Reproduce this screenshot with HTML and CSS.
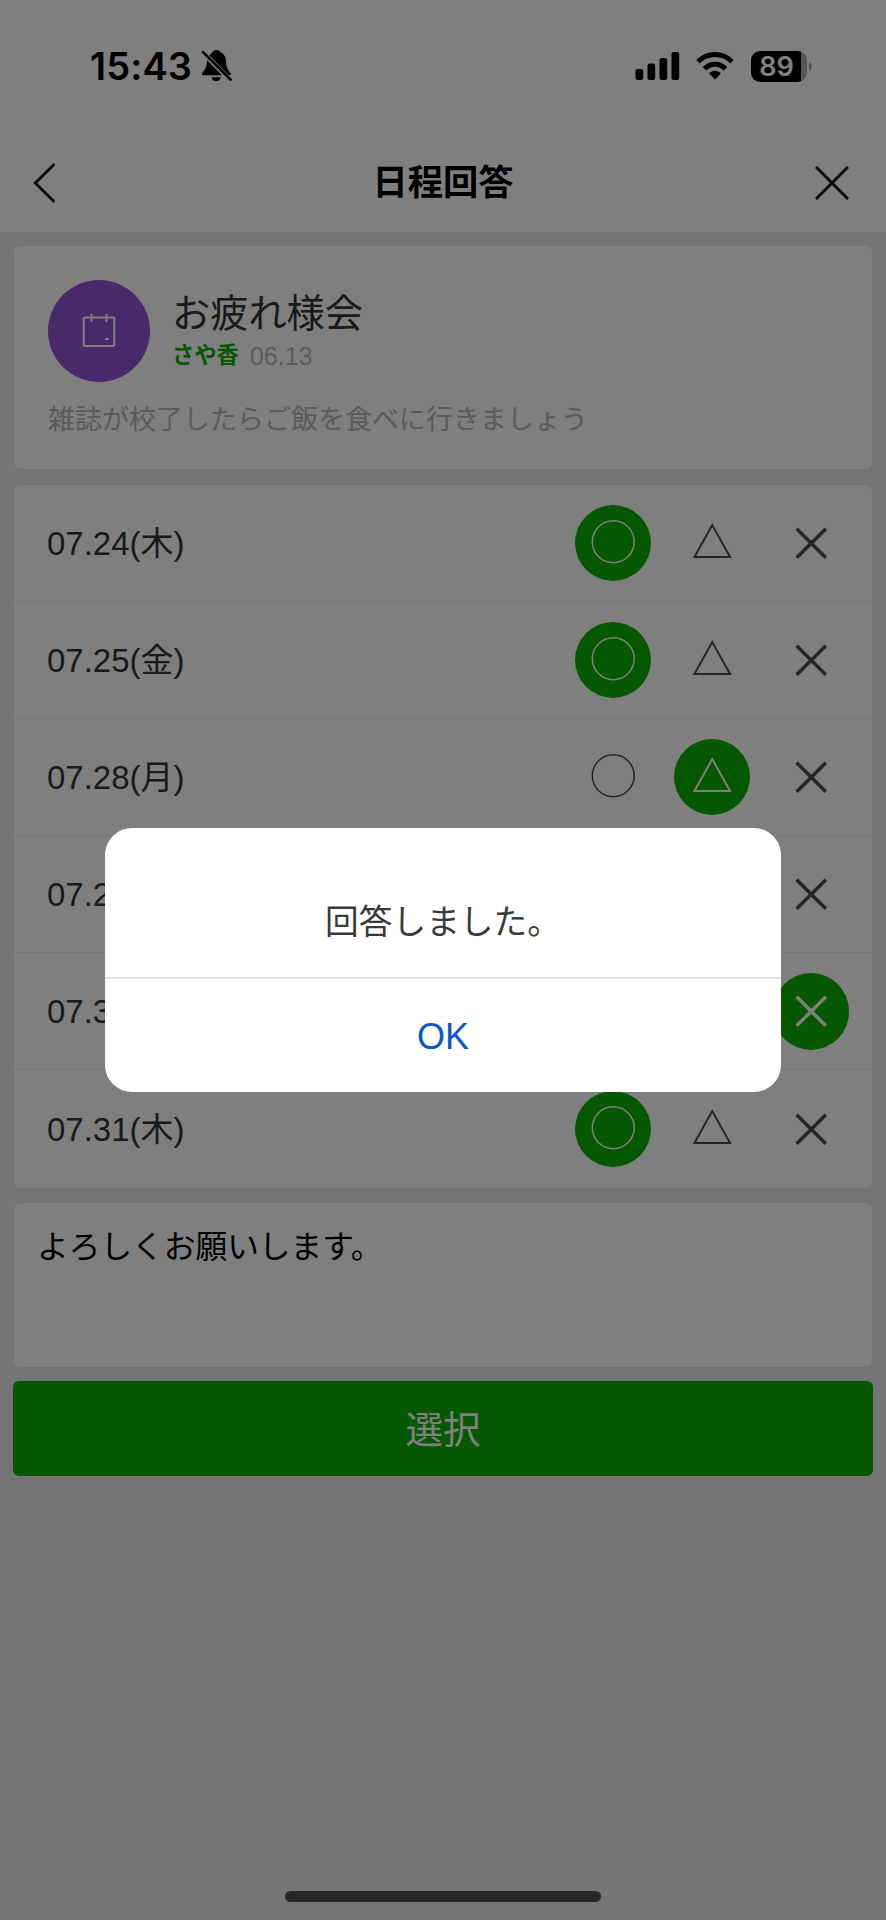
FILE: index.html
```html
<!DOCTYPE html>
<html lang="ja">
<head>
    <meta charset="UTF-8">
    <meta name="viewport" content="width=device-width, initial-scale=1.0">
    <title>日程回答</title>
    <link rel="stylesheet" href="styles.css">
</head>
<body>
<svg class="symbols">
    <symbol id="maru" viewBox="0 0 76 76">
        <circle cx="38" cy="36.5" r="20.8" stroke-width="1.5"/>
    </symbol>
    <symbol id="sankaku" viewBox="0 0 76 76">
        <path d="M38 20L55.700 51.700H20.300Z" stroke-width="2"/>
    </symbol>
    <symbol id="batsu" viewBox="0 0 76 76">
        <path d="M23.500 23.500l29 29M52.500 23.500l-29 29" stroke-width="3.500"/>
    </symbol>
</svg>

<div class="screen">
    <div class="status-bar">
        <span class="time">15:43</span>
        <svg class="bell" width="32" height="34" viewBox="0 0 32 34">
            <path d="M8.500 6.500C10 4.500 11 3.500 12 2.900C12.700 .3 18.300 .3 19.300 2.900C23.500 5 25 8.500 25 12.500C25.200 17 26 20 30 24.500V26H27.500Z"/>
            <path d="M6 11.300L21 26.300H2C.8 26.300 .6 24.600 1.500 23.500C5 19.700 5.700 17 6 11.300Z"/>
            <path d="M10.500 28.200h9.400c-1 5.300-8.400 5.300-9.400 0z"/>
            <path class="slash" d="M2 3.200L29.500 30.500"/>
        </svg>
        <div class="status-icons">
            <svg width="45" height="28" viewBox="0 0 45 28">
                <rect x="0.500" y="17" width="7.700" height="11" rx="2.200"/>
                <rect x="12.500" y="11.500" width="7.700" height="16.500" rx="2.200"/>
                <rect x="24.500" y="6" width="7.700" height="22" rx="2.200"/>
                <rect x="36.500" y="0" width="7.700" height="28" rx="2.200"/>
            </svg>
            <svg class="wifi" width="38" height="28" viewBox="0 0 38 28">
                <path class="arc" d="M2 9.800C11.500 .2 26.500 .2 36 9.800"/>
                <path class="arc" d="M8.500 16.700C14.500 10.600 23.500 10.600 29.500 16.700"/>
                <path d="M13 21.300C16.500 17.900 21.500 17.900 25 21.300L19 27.500Z"/>
            </svg>
            <div class="battery"><span>89</span></div>
            <svg width="4" height="9" viewBox="0 0 4 9"><path class="nub" d="M0 0C4 1.500 4 7.500 0 9Z"/></svg>
        </div>
    </div>

    <div class="nav">
        <svg class="line-icon" width="22" height="42" viewBox="0 0 22 42"><path d="M21.500 2L2.300 21L21.500 40"/></svg>
        <h1>日程回答</h1>
        <svg class="line-icon" width="34" height="34" viewBox="0 0 34 34"><path d="M1 1l32 32M33 1L1 33"/></svg>
    </div>

    <div class="content">
        <div class="card event">
            <div class="event-head">
                <div class="event-icon">
                    <svg width="34" height="36" viewBox="0 0 34 36">
                        <rect x="1.700" y="4.500" width="30.600" height="28.500" rx="1"/>
                        <path d="M9.500 1v8M24.500 1v8M23.200 26h3.600"/>
                    </svg>
                </div>
                <div>
                    <div class="event-title">お疲れ様会</div>
                    <div class="event-meta"><b>さや香</b><span>06.13</span></div>
                </div>
            </div>
            <div class="event-text">雑誌が校了したらご飯を食べに行きましょう</div>
        </div>

        <div class="card dates">
            <div class="row">
                <span>07.24(木)</span>
                <svg class="opt on"><use href="#maru"/></svg>
                <svg class="opt"><use href="#sankaku"/></svg>
                <svg class="opt"><use href="#batsu"/></svg>
            </div>
            <div class="row">
                <span>07.25(金)</span>
                <svg class="opt on"><use href="#maru"/></svg>
                <svg class="opt"><use href="#sankaku"/></svg>
                <svg class="opt"><use href="#batsu"/></svg>
            </div>
            <div class="row">
                <span>07.28(月)</span>
                <svg class="opt"><use href="#maru"/></svg>
                <svg class="opt on"><use href="#sankaku"/></svg>
                <svg class="opt"><use href="#batsu"/></svg>
            </div>
            <div class="row">
                <span>07.29(火)</span>
                <svg class="opt"><use href="#maru"/></svg>
                <svg class="opt"><use href="#sankaku"/></svg>
                <svg class="opt"><use href="#batsu"/></svg>
            </div>
            <div class="row">
                <span>07.30(水)</span>
                <svg class="opt"><use href="#maru"/></svg>
                <svg class="opt"><use href="#sankaku"/></svg>
                <svg class="opt on"><use href="#batsu"/></svg>
            </div>
            <div class="row">
                <span>07.31(木)</span>
                <svg class="opt on"><use href="#maru"/></svg>
                <svg class="opt"><use href="#sankaku"/></svg>
                <svg class="opt"><use href="#batsu"/></svg>
            </div>
        </div>

        <div class="card comment">よろしくお願いします。</div>
        <button class="submit">選択</button>
    </div>
    <div class="home-bar"></div>
</div>

<div class="overlay">
    <div class="dialog">
        <p>回答しました。</p>
        <button>OK</button>
    </div>
</div>
</body>
</html>
```
FILE: styles.css
```css
* {
    box-sizing: border-box;
}
body {
    margin: 0;
    background-color: #ebebef;
    font-family: "Liberation Sans", "Noto Sans CJK JP", sans-serif;
}
svg {
    display: block;
}
button {
    border: none;
    padding: 0;
    font-family: inherit;
}
.symbols {
    position: absolute;
    width: 0;
    height: 0;
}
.screen {
    display: flex;
    flex-direction: column;
    height: 1920px;
}

/* Status bar */
.status-bar {
    display: flex;
    align-items: center;
    height: 132px;
    padding: 0 73px 0 90px;
    background-color: #fff;
}
.time {
    width: 110px;
    font: 600 38px/44px Inter, sans-serif;
    letter-spacing: 0.1px;
}
.bell {
    margin-left: 1px;
}
.bell .slash {
    fill: none;
    stroke: #000;
    stroke-width: 2.6;
    stroke-linecap: round;
}
.status-icons {
    display: flex;
    align-items: center;
    margin-left: auto;
}
.wifi {
    margin: 0 17px 0 16px;
}
.arc {
    fill: none;
    stroke: #000;
    stroke-width: 5;
}
.battery {
    width: 56px;
    height: 31px;
    margin-right: 2px;
    padding-right: 5px;
    border-radius: 9px;
    background: linear-gradient(to right, #000 50px, #aaa 50px);
    color: #fff;
    font: 600 27px/31px Inter, sans-serif;
    text-align: center;
}
.nub {
    fill: #aaa;
}

/* Header */
.nav {
    display: flex;
    align-items: center;
    justify-content: space-between;
    height: 100px;
    padding: 1px 37px 0 33px;
    background-color: #fff;
}
.nav h1 {
    margin: 0 0 0 16px;
    font-size: 35.3px;
    line-height: 50px;
}
.line-icon {
    fill: none;
    stroke: #1c1c1c;
    stroke-width: 3;
}

/* Cards */
.content {
    display: flex;
    flex-direction: column;
    padding: 14px 13px 0;
}
.card {
    margin: 0 1px;
    border-radius: 6px;
    background-color: #fff;
    box-shadow: 0 0 0 1px #e6e6e9;
}
.event {
    height: 223px;
    padding: 34px 34px 0;
}
.event-head {
    display: flex;
    gap: 22px;
}
.event-icon {
    display: flex;
    align-items: center;
    justify-content: center;
    width: 102px;
    height: 102px;
    border-radius: 50%;
    background-color: #9052d4;
}
.event-icon svg {
    fill: none;
    stroke: #fff;
    stroke-width: 2;
}
.event-title {
    margin-top: 9px;
    color: #333;
    font-size: 38.2px;
    line-height: 50px;
}
.event-meta {
    display: flex;
    gap: 11px;
    align-items: center;
    height: 34px;
    line-height: 34px;
    font-size: 25px;
    color: #b4b6bf;
}
.event-meta b {
    color: #0aae00;
    font-size: 22.3px;
}
.event-text {
    margin-top: 18px;
    color: #b4b4b4;
    font-size: 27px;
    line-height: 40px;
}

.dates {
    margin-top: 16px;
}
.row {
    display: flex;
    align-items: center;
    gap: 22.5px;
    height: 117.1px;
    padding: 0 23px 0 33px;
    border-bottom: 1px solid #ececec;
    color: #333;
    font-size: 33px;
}
.row:last-child {
    border-bottom: none;
}
.row span {
    flex: 1;
    padding-bottom: 5px;
}
.opt {
    width: 76.5px;
    height: 76.5px;
    border-radius: 50%;
    fill: none;
    stroke: #4a4a4a;
}
.opt.on {
    background-color: #0aae00;
    stroke: #fff;
}
.comment {
    height: 164px;
    margin-top: 15px;
    padding: 21px 23px;
    font-size: 31.7px;
    line-height: 46px;
}
.submit {
    height: 95px;
    margin-top: 14px;
    padding-bottom: 4px;
    border-radius: 6px;
    background-color: #0aae00;
    color: #fff;
    font-size: 37.5px;
}
.home-bar {
    width: 316px;
    height: 11px;
    margin: auto auto 18px;
    border-radius: 6px;
    background-color: #4e4e4e;
}

/* Dialog */
.overlay {
    position: fixed;
    inset: 0;
    display: flex;
    align-items: center;
    justify-content: center;
    background-color: rgba(0, 0, 0, 0.5);
}
.dialog {
    width: 676px;
    height: 264px;
    border-radius: 27px;
    background-color: #fff;
    text-align: center;
}
.dialog p {
    height: 151px;
    margin: 0;
    padding-top: 69px;
    border-bottom: 2px solid #dfe3e7;
    color: #3a3a3a;
    font-size: 33.7px;
    line-height: 50px;
}
.dialog button {
    width: 100%;
    height: 113px;
    padding-top: 2px;
    background: none;
    color: #0a55cf;
    font-size: 36px;
}
```
